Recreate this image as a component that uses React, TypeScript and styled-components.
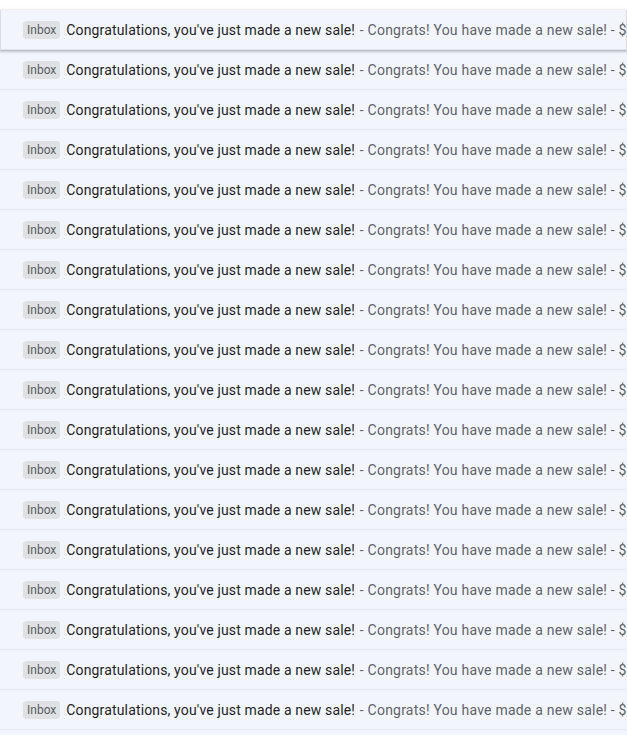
import React from "react";
import styled, { createGlobalStyle } from "styled-components";

const Global = createGlobalStyle`
  html, body { margin: 0; padding: 0; background: #ffffff; }
  body { font-family: Roboto, "Noto Sans", Arial, sans-serif; -webkit-font-smoothing: antialiased; }
`;

const Page = styled.div`
  padding-top: 10px;
  background: #ffffff;
  width: 100%;
  overflow: hidden;
`;

const List = styled.div`
  display: flex;
  flex-direction: column;
`;

const Row = styled.div<{ $hover?: boolean }>`
  display: flex;
  align-items: center;
  height: 40px;
  box-sizing: border-box;
  padding-left: 23px;
  background: #f2f6fc;
  border-bottom: 1px solid #e3e7ee;
  white-space: nowrap;
  overflow: hidden;
  position: relative;
  z-index: ${(p) => (p.$hover ? 2 : 1)};
  box-shadow: ${(p) =>
    p.$hover
      ? "inset 1px 0 0 #dadce0, inset -1px 0 0 #dadce0, 0 1px 2px 0 rgba(60,64,67,.3), 0 1px 3px 1px rgba(60,64,67,.15)"
      : "none"};
`;

const Badge = styled.span`
  display: inline-flex;
  align-items: center;
  justify-content: center;
  height: 18px;
  padding: 0 4px;
  border-radius: 4px;
  background: #dfe1e3;
  color: #5a5e62;
  font-size: 12px;
  line-height: 18px;
  margin-right: 6px;
  flex-shrink: 0;
`;

const Subject = styled.span`
  color: #1f1f1f;
  font-size: 14px;
  letter-spacing: 0.15px;
`;

const Snippet = styled.span`
  color: #5f6368;
  font-size: 14px;
  letter-spacing: 0.22px;
  padding-left: 1px;
`;

const rows = Array.from({ length: 19 }, (_, i) => i);

export default function App() {
  return (
    <Page>
      <Global />
      <List>
        {rows.map((i) => (
          <Row key={i} $hover={i === 0}>
            <Badge>Inbox</Badge>
            <Subject>Congratulations, you've just made a new sale!</Subject>
            <Snippet>&nbsp;- Congrats! You have made a new sale! - $19.00 from your store</Snippet>
          </Row>
        ))}
      </List>
    </Page>
  );
}
